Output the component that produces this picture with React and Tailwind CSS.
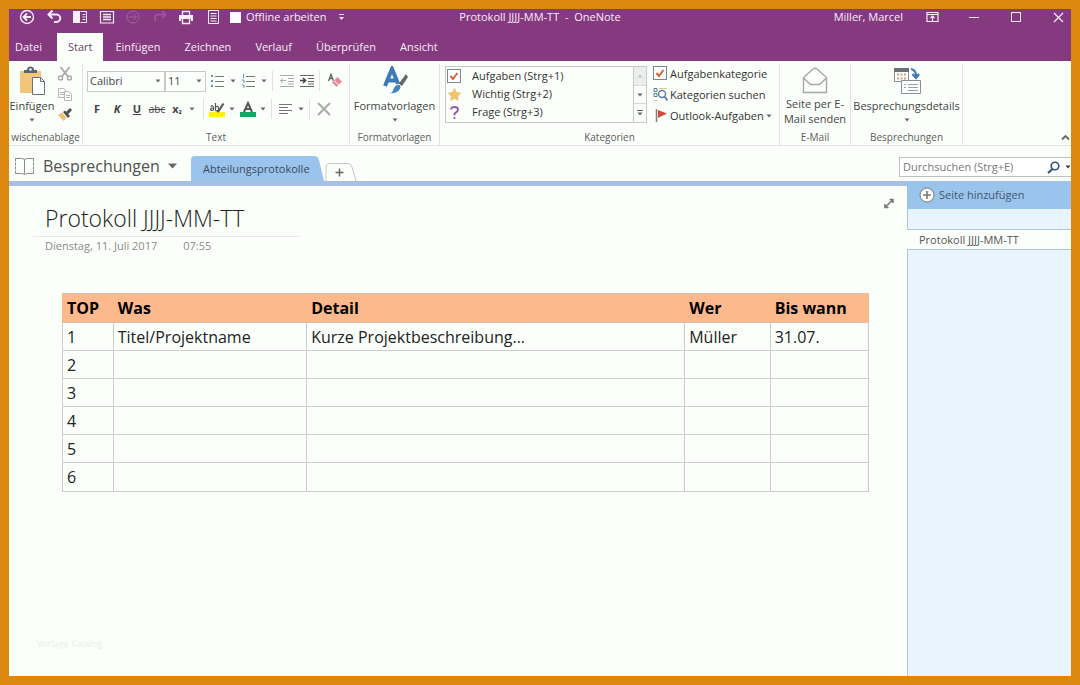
const menuTabs = ["Einfügen", "Zeichnen", "Verlauf", "Überprüfen", "Ansicht"];

const columns = [
  { name: "TOP", width: "w-[6.3%]" },
  { name: "Was", width: "w-[24%]" },
  { name: "Detail", width: "w-[46.9%]" },
  { name: "Wer", width: "w-[10.6%]" },
  { name: "Bis wann", width: "w-[12.2%]" },
];

const rows = [
  ["1", "Titel/Projektname", "Kurze Projektbeschreibung...", "Müller", "31.07."],
  ["2", "", "", "", ""],
  ["3", "", "", "", ""],
  ["4", "", "", "", ""],
  ["5", "", "", "", ""],
  ["6", "", "", "", ""],
];

function Icon({ w = 16, h = 16, className = "", children }) {
  return (
    <svg width={w} height={h} viewBox={`0 0 ${w} ${h}`} fill="none" stroke="currentColor" className={`shrink-0 ${className}`} aria-hidden="true">
      {children}
    </svg>
  );
}

function Caret({ className = "text-[#666]" }) {
  return (
    <Icon w={6} h={4} className={className}>
      <path d="M0.5 0.5h5L3 3.5z" fill="currentColor" stroke="none" />
    </Icon>
  );
}

function CheckIcon() {
  return (
    <Icon w={15} h={15}>
      <rect x="0.5" y="0.5" width="13" height="13" fill="#fff" stroke="#7d8792" />
      <path d="M3.5 7l2.500 3L10.500 4" stroke="#d2613c" strokeWidth="2" />
    </Icon>
  );
}

function Group({ label, className = "", children }) {
  return (
    <section className={`flex shrink-0 flex-col border-r border-[#dfe3e0] ${className}`} aria-label={label}>
      <div className="flex h-[65px] flex-col">{children}</div>
      <p className="flex h-4 items-center justify-center whitespace-nowrap text-[10px] text-[#5c5c5c]">{label}</p>
    </section>
  );
}

function Divider() {
  return <span className="h-5 w-px shrink-0 bg-[#dfe3e0]" />;
}

function SplitButton({ label, children }) {
  return (
    <button aria-label={label} className="flex w-[31px] items-center gap-1">
      {children}
      <Caret />
    </button>
  );
}

function FontSelect({ label, value, className }) {
  return (
    <div className={`relative ${className}`}>
      <select aria-label={label} defaultValue={value} className="h-[21px] w-full appearance-none border border-[#c6cbc8] bg-[#fdfffd] pl-[2px] text-[#444]">
        <option>{value}</option>
      </select>
      <span className="pointer-events-none absolute right-1 top-2">
        <Caret />
      </span>
    </div>
  );
}

function TitleBar() {
  return (
    <div className="grid h-4 grid-cols-[1fr_auto_1fr] items-center">
      <div className="flex items-center pl-[10px]">
        <div className="flex w-[202px] shrink-0 justify-between">
          <button aria-label="Zurück">
            <Icon>
              <circle cx="8" cy="8" r="6.5" strokeWidth="1.4" />
              <path d="M12 8H5M8 4.5L4.5 8L8 11.5" strokeWidth="1.8" />
            </Icon>
          </button>
          <button aria-label="Rückgängig">
            <Icon>
              <path d="M3 5.5h7.5a3.5 3.5 0 0 1 0 7.5H8M6.5 1.5L2.5 5.5L6.5 9.5" strokeWidth="2" />
            </Icon>
          </button>
          <button aria-label="An Desktop andocken">
            <Icon>
              <path d="M1 2h7v12H1z" fill="currentColor" stroke="none" />
              <path d="M8.5 2.5h6v11h-6M10.5 5.5h3M10.5 8h3M10.5 10.5h3" />
            </Icon>
          </button>
          <button aria-label="Ganzseitenansicht">
            <Icon>
              <path d="M1.5 2.500h13v11.500h-13z" strokeWidth="1.200" />
              <path d="M4 5.500h8M4 8h8M4 10.500h8" strokeWidth="1.600" />
            </Icon>
          </button>
          <button aria-label="Vorwärts" className="text-[#a366a0]">
            <Icon>
              <circle cx="8" cy="8" r="6" />
              <path d="M4 8h7M8.500 5L11.500 8L8.500 11" />
            </Icon>
          </button>
          <button aria-label="Wiederholen" className="text-[#9c5c99]">
            <Icon>
              <path d="M13 5.500H6.500a3.500 3.500 0 0 0-2 6.500M10 2L13.500 5.500L10 9" strokeWidth="1.500" />
            </Icon>
          </button>
          <button aria-label="Drucken">
            <Icon>
              <path d="M1 6h14v6h-2v-2H3v2H1z" fill="currentColor" stroke="none" />
              <path d="M4.500 6V2.500h7V6M4.500 10v4.500h7V10" strokeWidth="1.400" />
            </Icon>
          </button>
          <button aria-label="Seitenvorlagen">
            <Icon>
              <path d="M3.500 1.500h10v13h-10zM5.500 4.500h6M5.500 7h6M5.500 9.500h6M5.500 12h6" />
            </Icon>
          </button>
        </div>
        <button className="ml-[9px] flex items-center gap-[5px] whitespace-nowrap">
          <span className="size-[11px] bg-white" />
          Offline arbeiten
        </button>
        <button aria-label="Symbolleiste anpassen" className="ml-3">
          <Icon w={7} h={8}>
            <path d="M1 1.500h5" />
            <path d="M1 4h5L3.500 7z" fill="currentColor" stroke="none" />
          </Icon>
        </button>
      </div>
      <h1 className="whitespace-pre">Protokoll JJJJ-MM-TT  -  OneNote</h1>
      <div className="flex items-center justify-end gap-4">
        <span className="whitespace-nowrap">Miller, Marcel</span>
        <button aria-label="Menüband anzeigen" className="flex w-[26px] justify-center">
          <Icon w={13} h={12}>
            <path d="M1 1.500h11v9H1zM1 3.500h11M6.500 10V5M4.500 7L6.500 5L8.500 7" strokeWidth="1.200" />
          </Icon>
        </button>
        <button aria-label="Minimieren" className="flex w-[26px] justify-center">
          <Icon w={10} h={10}><path d="M0 5.500h10" /></Icon>
        </button>
        <button aria-label="Maximieren" className="flex w-[26px] justify-center">
          <Icon w={10} h={10}><path d="M0.500 0.500h9v9h-9z" /></Icon>
        </button>
        <button aria-label="Schließen" className="flex w-[26px] justify-center">
          <Icon w={11} h={11}><path d="M1 1l9 9M10 1l-9 9" strokeWidth="1.200" /></Icon>
        </button>
      </div>
    </div>
  );
}

function MenuTabs() {
  return (
    <nav className="mt-2 flex h-7">
      <button className="pl-[6px] pr-[15px]">Datei</button>
      <button className="bg-[#fbfffa] px-[11px] text-[#6b3f69]">Start</button>
      {menuTabs.map((tab) => (
        <button key={tab} className="px-3">
          {tab}
        </button>
      ))}
    </nav>
  );
}

function Clipboard() {
  return (
    <section className="flex w-[74px] shrink-0 flex-col border-r border-[#dfe3e0]" aria-label="Zwischenablage">
      <div className="flex h-[65px]">
        <button className="flex w-[46px] flex-col items-center pt-[2px]">
          <Icon w={28} h={30}>
            <path d="M2 5h21v22H2z" fill="#f2c57c" stroke="none" />
            <path d="M6 7V4h3a3.500 3.500 0 0 1 7 0h3v3z" fill="#5c6470" stroke="none" />
            <circle cx="12.500" cy="3.500" r="1.200" fill="#fff" stroke="none" />
            <path d="M14.500 11.500h8l4 4v13h-12z" fill="#fff" stroke="#6d7278" />
            <path d="M22.500 11.500v4h4" stroke="#6d7278" />
          </Icon>
          <span className="mt-[2px] leading-4">Einfügen</span>
          <span className="mt-1"><Caret /></span>
        </button>
        <div className="flex flex-col gap-1 pl-[2px] pt-[2px]">
          <button aria-label="Ausschneiden" className="text-[#a5a9a8]">
            <Icon>
              <path d="M3.500 1l7.500 9.500M12.500 1L5 10.500" strokeWidth="1.800" />
              <circle cx="3.500" cy="12" r="2" strokeWidth="1.400" />
              <circle cx="12.500" cy="12" r="2" strokeWidth="1.400" />
            </Icon>
          </button>
          <button aria-label="Kopieren" className="text-[#b3b7b6]">
            <Icon>
              <path d="M1.500 2.500h5l2 2v7h-7zM3 6.500h4M3 8.500h4" />
              <path d="M7.500 5.500h4l3 3v6h-7z" fill="#fbfffa" />
              <path d="M9 9.500h4M9 11.500h4" />
            </Icon>
          </button>
          <button aria-label="Format übertragen">
            <Icon>
              <path d="M1 9l4-2.500 4.500 5L6.500 15z" fill="#efbf73" stroke="none" />
              <path d="M6 6l2-1.500 5 5.500-2 2zM9 6l4-4 2 2-3.500 4z" fill="#505050" stroke="none" />
            </Icon>
          </button>
        </div>
      </div>
      <p className="flex h-4 items-center justify-center whitespace-nowrap text-[10px] text-[#5c5c5c]">wischenablage</p>
    </section>
  );
}

function TextGroup() {
  return (
    <Group label="Text" className="w-[267px]">
      <div className="mt-[6px] flex h-[22px] items-center pl-1">
        <FontSelect label="Schriftart" value="Calibri" className="w-[78px]" />
        <FontSelect label="Schriftgrad" value="11" className="mr-1 w-[41px]" />
        <SplitButton label="Aufzählungszeichen">
          <Icon>
            <path d="M1 3h2M1 8h2M1 13h2" stroke="#6a8cae" strokeWidth="2" />
            <path d="M5 3.500h9M5 8.500h9M5 13.500h9" stroke="#777" />
          </Icon>
        </SplitButton>
        <SplitButton label="Nummerierung">
          <Icon>
            <path d="M2.500 1v4M1 7h2v3M1 12h2v3" stroke="#6a8cae" />
            <path d="M5 3.500h9M5 8.500h9M5 13.500h9" stroke="#777" />
          </Icon>
        </SplitButton>
        <Divider />
        <button aria-label="Einzug verkleinern" className="ml-[6px] w-5 text-[#aaa]">
          <Icon><path d="M1 2.500h14M9 5.500h6M9 8.500h6M9 11h6M1 13.500h14M7 7.500H1M4 5L1.500 7.500L4 10" /></Icon>
        </button>
        <button aria-label="Einzug vergrößern" className="w-5 text-[#666]">
          <Icon>
            <path d="M1 2.500h14M9 5.500h6M9 8.500h6M9 11h6M1 13.500h14" />
            <path d="M1 7.500h6M4 5L6.500 7.500L4 10" stroke="#444" strokeWidth="1.600" />
          </Icon>
        </button>
        <Divider />
        <button aria-label="Formatierung löschen" className="ml-[7px]">
          <Icon>
            <path d="M1.500 8L4 1.500L6.500 8M2.500 5.500h3" stroke="#666" strokeWidth="1.400" />
            <path d="M10.500 4l4.500 4.500-5.500 5.500L5 9.500z" fill="#e58c9b" stroke="none" />
            <path d="M7 7.500l4.500 4.500" stroke="#fff" />
          </Icon>
        </button>
      </div>
      <div className="mt-[7px] flex h-5 items-center pl-1 text-[#444]">
        <button aria-label="Fett" className="w-5 font-bold">F</button>
        <button aria-label="Kursiv" className="w-5 font-bold italic">K</button>
        <button aria-label="Unterstrichen" className="w-5 font-bold underline">U</button>
        <button aria-label="Durchgestrichen" className="w-5 text-[10px] line-through">abc</button>
        <button aria-label="Tiefgestellt" className="w-5 font-bold">
          x<span className="text-[8px]">₂</span>
        </button>
        <button aria-label="Weitere" className="mr-2 pl-[2px]"><Caret /></button>
        <Divider />
        <span className="w-[5px]" />
        <SplitButton label="Texthervorhebung">
          <Icon>
            <path d="M0 11h16v5H0z" fill="#fff200" stroke="none" />
            <path d="M1.500 5.500q3-1.500 3 1v3M4.500 7q-3 0-3 1.500t3 .5M6.500 2v7.500M6.500 6q3-2 3 1.500t-3 2" stroke="#555" strokeWidth="1.200" />
            <path d="M14.500 2.500L10 9.500l-1.500 1.500" stroke="#555" strokeWidth="2" />
          </Icon>
        </SplitButton>
        <SplitButton label="Schriftfarbe">
          <Icon>
            <path d="M0 11h16v5H0z" fill="#1ba462" stroke="none" />
            <path d="M4 11L8 2L12 11M5.500 8h5" stroke="#555" strokeWidth="2" />
          </Icon>
        </SplitButton>
        <Divider />
        <span className="w-[6px]" />
        <SplitButton label="Absatzausrichtung">
          <Icon><path d="M1 3.500h13M1 6.500h9M1 9.500h13M1 12.500h9" stroke="#777" /></Icon>
        </SplitButton>
        <Divider />
        <button aria-label="Löschen" className="ml-[6px]">
          <Icon><path d="M2 2l12 12M14 2L2 14" stroke="#aaa" strokeWidth="2" /></Icon>
        </button>
      </div>
    </Group>
  );
}

function Categories() {
  return (
    <Group label="Kategorien" className="w-[340px]">
      <div className="flex gap-[6px] pl-[5px] pt-[2px] text-[#333]">
        <div className="flex h-[57px] w-[202px] border border-[#c6cbc8]">
          <div className="flex flex-1 flex-col">
            <button className="flex h-[18px] items-center gap-[10px] pl-px">
              <CheckIcon />
              Aufgaben (Strg+1)
            </button>
            <button className="flex h-[18px] items-center gap-[10px] pl-px">
              <Icon w={15} h={15}>
                <path d="M7.500 0.500l2.200 4.600 4.800.7-3.500 3.400.8 5-4.300-2.400-4.300 2.400.8-5L.5 5.800l4.800-.7z" fill="#f0c46c" stroke="none" />
              </Icon>
              Wichtig (Strg+2)
            </button>
            <button className="flex h-[18px] items-center gap-[10px] pl-px">
              <Icon w={15} h={15}>
                <path d="M4 4.500Q4 2 7.500 2T11 4.500Q11 6.500 7.500 8.500V10.500M7.500 12v2" stroke="#9259b5" strokeWidth="1.800" />
              </Icon>
              Frage (Strg+3)
            </button>
          </div>
          <div className="flex w-[13px] flex-col border-l border-[#c6cbc8]">
            <button aria-label="Nach oben" className="flex flex-1 items-center justify-center bg-[#eceeed]">
              <Caret className="rotate-180 text-[#c3c6c4]" />
            </button>
            <button aria-label="Nach unten" className="flex flex-1 items-center justify-center border-y border-[#d5d9d6]">
              <Caret />
            </button>
            <button aria-label="Mehr" className="flex flex-1 flex-col items-center justify-center gap-px">
              <span className="h-px w-[6px] bg-[#666]" />
              <Caret />
            </button>
          </div>
        </div>
        <div className="-mt-[3px] flex flex-col">
          <button className="flex h-[21px] items-center gap-[2px] whitespace-nowrap">
            <CheckIcon />
            Aufgabenkategorie
          </button>
          <button className="flex h-[21px] items-center gap-[2px] whitespace-nowrap">
            <Icon w={15} h={15}>
              <path d="M1 1.500h3v3H1zM1 6.500h3v3H1z" stroke="#5f7d9c" />
              <path d="M6 1.500h8M1 13.500h4" stroke="#d9c39a" />
              <circle cx="9" cy="7" r="3.500" stroke="#5b7ea3" strokeWidth="1.400" />
              <path d="M11.500 9.500l3 4" stroke="#5b7ea3" strokeWidth="1.800" />
            </Icon>
            Kategorien suchen
          </button>
          <button className="flex h-[21px] items-center gap-[2px] whitespace-nowrap">
            <Icon w={15} h={15}>
              <path d="M3.500 1v13" stroke="#7d7d7d" strokeWidth="1.500" />
              <path d="M5 2l9 3.500L5 10z" fill="#d3483a" stroke="none" />
            </Icon>
            Outlook-Aufgaben
            <Caret />
          </button>
        </div>
      </div>
    </Group>
  );
}

function Ribbon() {
  return (
    <div className="flex h-[85px] items-start overflow-hidden border-b border-[#e1e5ea] pt-[3px] text-[#444]">
      <Clipboard />
      <TextGroup />
      <Group label="Formatvorlagen" className="w-[90px]">
        <button className="flex flex-col items-center pt-[2px]">
          <Icon w={28} h={30}>
            <path d="M4 20L11 3L18 20M7 14.500h8" stroke="#3d7ab5" strokeWidth="4" />
            <path d="M25 8l2 3-6 9-3.500-2z" fill="#666" stroke="none" />
            <path d="M16 18.500q4-1 4 3-2 7-13 6.500 5-1.500 5-5 1-3.500 4-4.500z" fill="#4585bf" stroke="#fff" />
          </Icon>
          <span className="mt-[2px] leading-4">Formatvorlagen</span>
          <span className="mt-1"><Caret /></span>
        </button>
      </Group>
      <Categories />
      <Group label="E-Mail" className="w-[71px]">
        <button className="flex flex-col items-center pt-[2px] leading-[15px]">
          <Icon w={26} h={30} className="text-[#a3a8a6]">
            <path d="M1.500 11.500L11 3q2-1.500 4 0l9.500 8.500v15h-23z" strokeWidth="1.400" />
            <path d="M1.500 12l7 6.500h9l7-6.500" strokeWidth="1.400" />
          </Icon>
          <span>Seite per E-<br />Mail senden</span>
        </button>
      </Group>
      <Group label="Besprechungen" className="w-[112px]">
        <button className="flex flex-col items-center pt-[2px]">
          <Icon w={28} h={30}>
            <path d="M1.500 3.500h14v12h-14z" stroke="#8b8f94" fill="#fff" />
            <path d="M1 2h15v4H1z" fill="#6b7077" stroke="none" />
            <path d="M4 8.500h2M7.500 8.500h2M11 8.500h2M4 12.500h2M7.500 12.500h2M11 12.500h2" stroke="#d59a76" strokeWidth="2" />
            <path d="M8.500 14.500h19v13h-19z" fill="#fff" stroke="#8b8f94" />
            <path d="M11 18.500h2M15 18.500h10M11 21.500h2M15 21.500h10M15 24.500h10" stroke="#9a9fa5" />
            <path d="M18 3q5.500 1 5 8M19.500 8l3.500 4 3-4" stroke="#3d7ab5" strokeWidth="2.200" />
          </Icon>
          <span className="mt-[2px] leading-4">Besprechungsdetails</span>
          <span className="mt-1"><Caret /></span>
        </button>
      </Group>
      <button aria-label="Menüband reduzieren" className="mb-1 ml-auto mr-px self-end">
        <Icon w={9} h={7}><path d="M1 5.500L4.500 2L8 5.500" stroke="#666" strokeWidth="1.800" /></Icon>
      </button>
    </div>
  );
}

function NotebookBar() {
  return (
    <div className="flex h-[35px] items-end">
      <button className="flex h-[30px] w-[182px] items-center pl-[5px] text-base text-[#505050]">
        <Icon w={21} h={19}>
          <path d="M10.500 2.500v14M1.500 1.500h6q3 0 3 1.500 0-1.500 3-1.500h6v15h-6q-3 0-3 1.500 0-1.500-3-1.500h-6z" stroke="#8a8a8a" />
          <path d="M0 5h3M0 9h3M0 13h3M18 5h3M18 9h3M18 13h3" stroke="#fbfffa" />
        </Icon>
        <span className="ml-2">Besprechungen</span>
        <Icon w={9} h={6} className="ml-2"><path d="M0 0.500h9L4.500 5.500z" fill="#666" stroke="none" /></Icon>
      </button>
      <button className="flex h-[25px] items-center rounded-tl-[4px] bg-[#9bc4ec] pl-3 pr-[2px] text-[#3c4a5c]">Abteilungsprotokolle</button>
      <Icon w={13} h={25} className="-ml-px">
        <path d="M0 0h3q4 0 5 4l5 21H0z" fill="#9bc4ec" stroke="none" />
      </Icon>
      <button aria-label="Neuer Abschnitt" className="ml-px">
        <Icon w={32} h={18}>
          <path d="M1 18V5q0-4.500 4-4.500h18q3 0 4 3.500L31 18" stroke="#c3c7c6" />
          <path d="M10.500 9.500h8M14.500 5.500v8" stroke="#666" strokeWidth="1.500" />
        </Icon>
      </button>
      <form className="mb-1 ml-auto flex h-5 w-[172px] items-center border border-r-0 border-[#bfc4c2] bg-white pl-[3px]">
        <input type="search" aria-label="Durchsuchen" placeholder="Durchsuchen (Strg+E)" className="min-w-0 flex-1 placeholder:text-[#777]" />
        <button aria-label="Suchen" className="mr-[5px] flex items-center gap-[6px]">
          <Icon w={13} h={13} className="text-[#31517d]">
            <circle cx="8" cy="5" r="3.800" strokeWidth="1.600" />
            <path d="M5.500 8L1 12" strokeWidth="2.200" />
          </Icon>
        </button>
        <Caret className="text-[#333]" />
      </form>
    </div>
  );
}

function Page() {
  return (
    <main className="relative min-w-0 flex-1 border-t-[5px] border-[#a6c1e2] pl-[53px] pr-[38px]">
      <button aria-label="Ganze Seite" className="absolute right-[12px] top-3">
        <Icon w={12} h={11} className="text-[#777]">
          <path d="M2 9.500L10 1.500M6.500 1.500H10V5M2 6v3.500h3.500" strokeWidth="1.600" />
        </Icon>
      </button>
      <header className="-ml-[28px] w-[265px]">
        <div className="-ml-px border-b border-[#e6e9e6] pb-1 pl-3 pt-[18px]">
          <h2 className="whitespace-nowrap text-[23px] font-light leading-7 text-[#222]">Protokoll JJJJ-MM-TT</h2>
        </div>
        <p className="flex gap-[26px] pl-[11px] pt-px leading-4 text-[#8a8a8a]">
          <span>Dienstag, 11. Juli 2017</span>
          <span>07:55</span>
        </p>
      </header>
      <table className="mt-[39px] w-full table-fixed border-collapse text-left text-base leading-5 text-[#222]">
        <thead>
          <tr className="h-[29px] bg-[#fdb98b] text-black">
            {columns.map((col) => (
              <th key={col.name} className={`${col.width} border border-x-[#fdb98b] border-y-[#d8bfae] px-1 py-0`}>
                {col.name}
              </th>
            ))}
          </tr>
        </thead>
        <tbody>
          {rows.map((row) => (
            <tr key={row[0]} className="h-[28px] last:h-[29px]">
              {row.map((cell, i) => (
                <td key={i} className="whitespace-nowrap border border-[#cbcfcb] px-1 py-0">
                  {cell}
                </td>
              ))}
            </tr>
          ))}
        </tbody>
      </table>
      <p className="mt-36 -ml-[25px] text-[9px] leading-4 text-[#e9ede9]">Vorlage Katalog</p>
    </main>
  );
}

function PageList() {
  return (
    <aside className="w-[164px] shrink-0 border-l border-[#b4c4d4] bg-[#e8f4fe] text-[#555]">
      <button className="-ml-px flex h-7 w-[calc(100%+1px)] items-center gap-1 bg-[#9bc4ec] pl-3 text-[#44566c]">
        <Icon>
          <circle cx="8" cy="8" r="7" fill="#fff" stroke="#777" />
          <path d="M4 8h8M8 4v8" stroke="#777" strokeWidth="1.600" />
        </Icon>
        Seite hinzufügen
      </button>
      <a href="#protokoll" className="-ml-px mt-5 flex h-[21px] items-center border-y border-[#b4c4d4] bg-[#fbfffa] pl-3">
        Protokoll JJJJ-MM-TT
      </a>
    </aside>
  );
}

export default function App() {
  return (
    <div className="flex min-h-screen flex-col border-[9px] border-[#dc870d] bg-[#fbfffa] font-['Open_Sans','Noto_Sans',sans-serif] text-[11px] leading-4">
      <header className="bg-[#85397f] text-[#f7eef6]">
        <TitleBar />
        <MenuTabs />
      </header>
      <Ribbon />
      <NotebookBar />
      <div className="flex flex-1">
        <Page />
        <PageList />
      </div>
    </div>
  );
}
